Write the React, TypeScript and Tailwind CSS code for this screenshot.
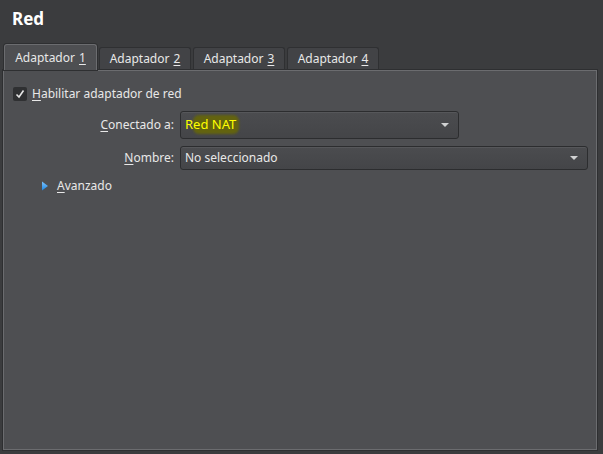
const font = { fontFamily: '"Noto Sans", "Open Sans", sans-serif' };

function Tab({ label, n, active }: { label: string; n: string; active?: boolean }) {
  if (active) {
    return (
      <div className="relative z-10 -mb-px flex h-[26px] w-[93px] items-center justify-center rounded-t-[3px] border border-b-0 border-[#6b6c6f] bg-[#4e4f52] text-[12px] text-[#e8e8e8] shadow-[0_0_0_1px_#2e2f31]">
        {label} <span className="ml-1 underline underline-offset-2">{n}</span>
      </div>
    );
  }
  return (
    <div className="mt-[3px] flex h-[23px] w-[92px] items-center justify-center rounded-t-[3px] border border-b-0 border-[#2f3032] bg-[#424346] text-[12px] text-[#e8e8e8]">
      {label} <span className="ml-1 underline underline-offset-2">{n}</span>
    </div>
  );
}

function Combo({ children, className }: { children: React.ReactNode; className: string }) {
  return (
    <div
      className={
        "flex items-center justify-between rounded-[3px] border border-[#2c2d2f] bg-gradient-to-b from-[#4b4c4f] to-[#444548] pl-[4px] pr-[9px] text-[12px] text-[#e8e8e8] shadow-[inset_0_1px_0_#56575a] " +
        className
      }
    >
      {children}
      <svg width="8" height="4" viewBox="0 0 8 4">
        <path d="M0 0h8L4 4z" fill="#d0d1d2" />
      </svg>
    </div>
  );
}

export default function App() {
  return (
    <div className="flex h-[454px] w-[603px] flex-col bg-[#3b3c3e] pl-[3px] pr-[6px] pb-[4px]" style={font}>
      <div className="h-[44px] pl-[9px] pt-[9px] text-[17px] font-bold leading-[20px] text-white">Red</div>

      <div className="flex gap-[2px] pl-[1px]">
        <Tab label="Adaptador" n="1" active />
        <Tab label="Adaptador" n="2" />
        <Tab label="Adaptador" n="3" />
        <Tab label="Adaptador" n="4" />
      </div>

      <div className="flex-1 border border-[#6b6c6f] bg-[#4e4f52] shadow-[0_0_0_1px_#2e2f31]">
        <div className="flex items-center pl-[9px] pt-[14px]">
          <div className="flex h-[14px] w-[14px] items-center justify-center rounded-[2px] bg-[#2f3032]">
            <svg width="10" height="10" viewBox="0 0 10 10">
              <path d="M1.5 5.5L4 8L8.5 1.5" stroke="#e6e6e6" strokeWidth="1.6" fill="none" />
            </svg>
          </div>
          <span className="ml-[5px] text-[12px] text-[#e8e8e8]">
            <span className="underline underline-offset-2">H</span>abilitar adaptador de red
          </span>
        </div>

        <div className="mt-[8px] flex items-center">
          <div className="w-[176px] pr-[6px] text-right text-[12px] text-[#e8e8e8]">
            <span className="underline underline-offset-2">C</span>onectado a:
          </div>
          <Combo className="h-[28px] w-[279px]">
            <span className="relative text-[13px] text-[#ffff00]">
              <span className="absolute left-[8px] top-[0px] h-[19px] w-[46px] rounded-[6px] bg-[#63630f] blur-[1px]" />
              <span className="relative">Red NAT</span>
            </span>
          </Combo>
        </div>

        <div className="mt-[7px] flex items-center">
          <div className="w-[176px] pr-[6px] text-right text-[12px] text-[#e8e8e8]">
            <span className="underline underline-offset-2">N</span>ombre:
          </div>
          <Combo className="h-[24px] w-[408px]">
            <span>No seleccionado</span>
          </Combo>
        </div>

        <div className="mt-[7px] flex items-center pl-[38px]">
          <svg width="7" height="10" viewBox="0 0 7 10">
            <defs>
              <linearGradient id="tri" x1="0" y1="0" x2="0" y2="1">
                <stop offset="0" stopColor="#7cc4ff" />
                <stop offset="1" stopColor="#1f86e0" />
              </linearGradient>
            </defs>
            <path d="M0 0.5L6 5L0 9.5z" fill="url(#tri)" />
          </svg>
          <span className="ml-[8px] text-[12px] text-[#e8e8e8]">
            <span className="underline underline-offset-2">A</span>vanzado
          </span>
        </div>
      </div>
    </div>
  );
}
